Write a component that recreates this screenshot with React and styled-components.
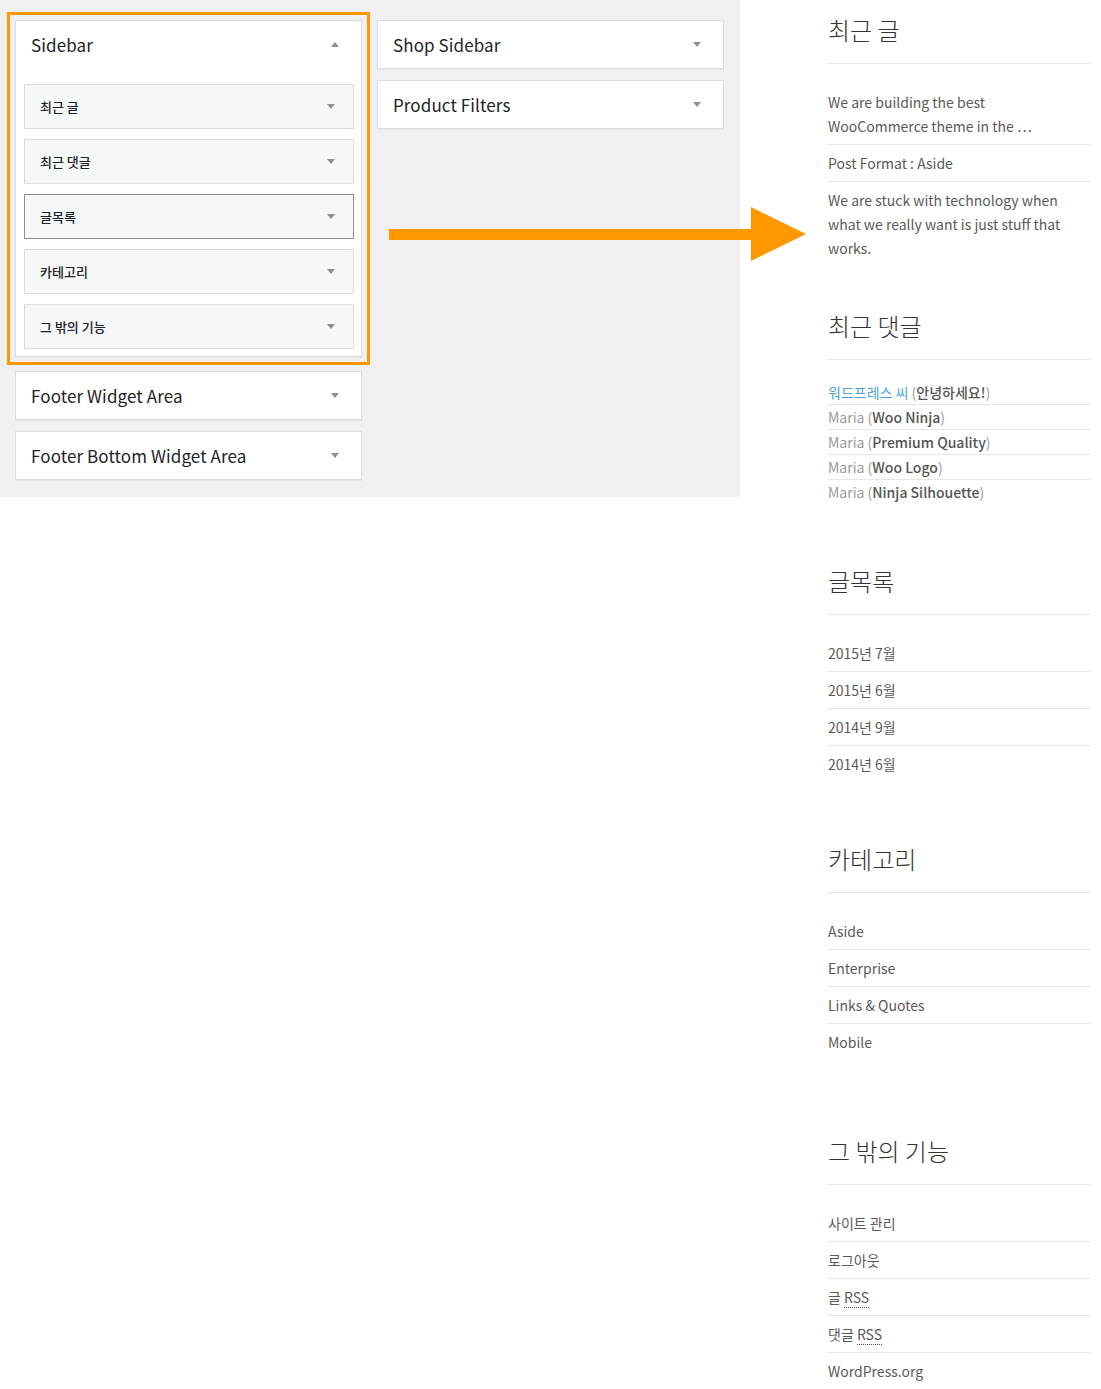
import React from "react";
import styled, { createGlobalStyle, css } from "styled-components";

const GlobalStyle = createGlobalStyle`
  html, body { margin: 0; padding: 0; background: #fff; }
  body {
    font-family: "Noto Sans CJK KR", "Noto Sans", "Liberation Sans", sans-serif;
    -webkit-font-smoothing: antialiased;
  }
  * { box-sizing: border-box; }
`;

const Page = styled.div`
  position: relative;
  display: flex;
  align-items: flex-start;
  width: 1101px;
  min-height: 1389px;
  overflow: hidden;
`;

const AdminPanel = styled.div`
  width: 740px;
  height: 497px;
  flex: none;
  background: #f0f0f1;
  padding: 20px 16px 0 15px;
  display: flex;
  gap: 15px;
  align-items: flex-start;
`;

const Column = styled.div`
  width: 347px;
  display: flex;
  flex-direction: column;
  gap: 11px;
`;

const WidgetBox = styled.div`
  background: #fff;
  border: 1px solid #dcdcde;
  box-shadow: 0 1px 1px rgba(0, 0, 0, 0.04);
  ${(p) =>
    p.$highlight &&
    css`
      outline: 3px solid #ff9800;
      outline-offset: 5px;
      margin-bottom: 3px;
    `}
`;

const WidgetHeader = styled.div`
  height: 47px;
  display: flex;
  align-items: center;
  justify-content: space-between;
  padding: 0 22px 0 15px;
`;

const WidgetTitle = styled.h3`
  margin: 0;
  font-size: 17px;
  font-weight: 400;
  color: #1d2327;
  letter-spacing: 0.1px;
`;

const Arrow = styled.span`
  flex: none;
  width: 0;
  height: 0;
  border-left: 4px solid transparent;
  border-right: 4px solid transparent;
  ${(p) =>
    p.$up
      ? css`border-bottom: 5px solid #8c8f94;`
      : css`border-top: 5px solid #8c8f94;`}
`;

const InnerList = styled.div`
  padding: 16px 7px 7px 8px;
  display: flex;
  flex-direction: column;
  gap: 10px;
`;

const InnerWidget = styled.div`
  height: 45px;
  border: 1px solid ${(p) => (p.$active ? "#8c8f94" : "#dcdcde")};
  background: #f6f7f7;
  display: flex;
  align-items: center;
  justify-content: space-between;
  padding: 0 18px 0 15px;
  font-size: 13px;
  font-weight: 500;
  color: #1d2327;
`;

const Overlay = styled.svg`
  position: absolute;
  left: 389px;
  top: 206px;
  overflow: visible;
`;

const Sidebar = styled.aside`
  margin-left: 88px;
  width: 262px;
  padding-top: 12px;
`;

const Section = styled.section`
  margin-top: ${(p) => p.$mt}px;
`;

const Heading = styled.h2`
  margin: 0;
  font-size: 24px;
  line-height: 36px;
  font-weight: 300;
  color: #333;
  padding-bottom: 15px;
  border-bottom: 1px solid #e6e6e6;
`;

const List = styled.ul`
  list-style: none;
  margin: 20px 0 0;
  padding: 0;
`;

const Item = styled.li`
  padding: ${(p) => (p.$compact ? "0" : "6px 0")};
  line-height: 24px;
  font-size: 14px;
  color: #5a5a5a;
  white-space: nowrap;
  border-bottom: 1px solid #e6e6e6;
  &:last-child {
    border-bottom: none;
  }
`;

const Author = styled.span`
  color: ${(p) => (p.$link ? "#4aa3df" : "#9a9a9a")};
`;

const Paren = styled.span`
  color: #9a9a9a;
`;

const PostRef = styled.span`
  color: #555;
  font-weight: 500;
`;

const Abbr = styled.abbr`
  text-decoration: none;
  border-bottom: 1px dotted #555;
`;

const adminLeft = [
  { title: "최근 글" },
  { title: "최근 댓글" },
  { title: "글목록", active: true },
  { title: "카테고리" },
  { title: "그 밖의 기능" },
];

const comments = [
  { author: "워드프레스 씨", post: "안녕하세요!", link: true },
  { author: "Maria", post: "Woo Ninja" },
  { author: "Maria", post: "Premium Quality" },
  { author: "Maria", post: "Woo Logo" },
  { author: "Maria", post: "Ninja Silhouette" },
];

export default function App() {
  return (
    <>
      <GlobalStyle />
      <Page>
        <AdminPanel>
          <Column>
            <WidgetBox $highlight>
              <WidgetHeader>
                <WidgetTitle>Sidebar</WidgetTitle>
                <Arrow $up />
              </WidgetHeader>
              <InnerList>
                {adminLeft.map((w) => (
                  <InnerWidget key={w.title} $active={w.active}>
                    <span>{w.title}</span>
                    <Arrow />
                  </InnerWidget>
                ))}
              </InnerList>
            </WidgetBox>
            <WidgetBox>
              <WidgetHeader>
                <WidgetTitle>Footer Widget Area</WidgetTitle>
                <Arrow />
              </WidgetHeader>
            </WidgetBox>
            <WidgetBox>
              <WidgetHeader>
                <WidgetTitle>Footer Bottom Widget Area</WidgetTitle>
                <Arrow />
              </WidgetHeader>
            </WidgetBox>
          </Column>
          <Column>
            <WidgetBox>
              <WidgetHeader>
                <WidgetTitle>Shop Sidebar</WidgetTitle>
                <Arrow />
              </WidgetHeader>
            </WidgetBox>
            <WidgetBox>
              <WidgetHeader>
                <WidgetTitle>Product Filters</WidgetTitle>
                <Arrow />
              </WidgetHeader>
            </WidgetBox>
          </Column>
        </AdminPanel>

        <Sidebar>
          <Section $mt={0}>
            <Heading>최근 글</Heading>
            <List>
              <Item>
                We are building the best
                <br />
                WooCommerce theme in the …
              </Item>
              <Item>Post Format : Aside</Item>
              <Item>
                We are stuck with technology when
                <br />
                what we really want is just stuff that
                <br />
                works.
              </Item>
            </List>
          </Section>

          <Section $mt={42}>
            <Heading>최근 댓글</Heading>
            <List>
              {comments.map((c, i) => (
                <Item key={i} $compact>
                  <Author $link={c.link}>{c.author}</Author> <Paren>(</Paren>
                  <PostRef>{c.post}</PostRef>
                  <Paren>)</Paren>
                </Item>
              ))}
            </List>
          </Section>

          <Section $mt={59}>
            <Heading>글목록</Heading>
            <List>
              {["2015년 7월", "2015년 6월", "2014년 9월", "2014년 6월"].map((m) => (
                <Item key={m}>{m}</Item>
              ))}
            </List>
          </Section>

          <Section $mt={59}>
            <Heading>카테고리</Heading>
            <List>
              {["Aside", "Enterprise", "Links & Quotes", "Mobile"].map((c) => (
                <Item key={c}>{c}</Item>
              ))}
            </List>
          </Section>

          <Section $mt={73}>
            <Heading>그 밖의 기능</Heading>
            <List>
              <Item>사이트 관리</Item>
              <Item>로그아웃</Item>
              <Item>
                글 <Abbr title="Really Simple Syndication">RSS</Abbr>
              </Item>
              <Item>
                댓글 <Abbr title="Really Simple Syndication">RSS</Abbr>
              </Item>
              <Item>WordPress.org</Item>
            </List>
          </Section>
        </Sidebar>

        <Overlay width="418" height="56" viewBox="0 0 418 56">
          <rect x="0" y="23" width="364" height="11" fill="#ff9800" />
          <polygon points="362,1 417,28 362,55" fill="#ff9800" />
        </Overlay>
      </Page>
    </>
  );
}
